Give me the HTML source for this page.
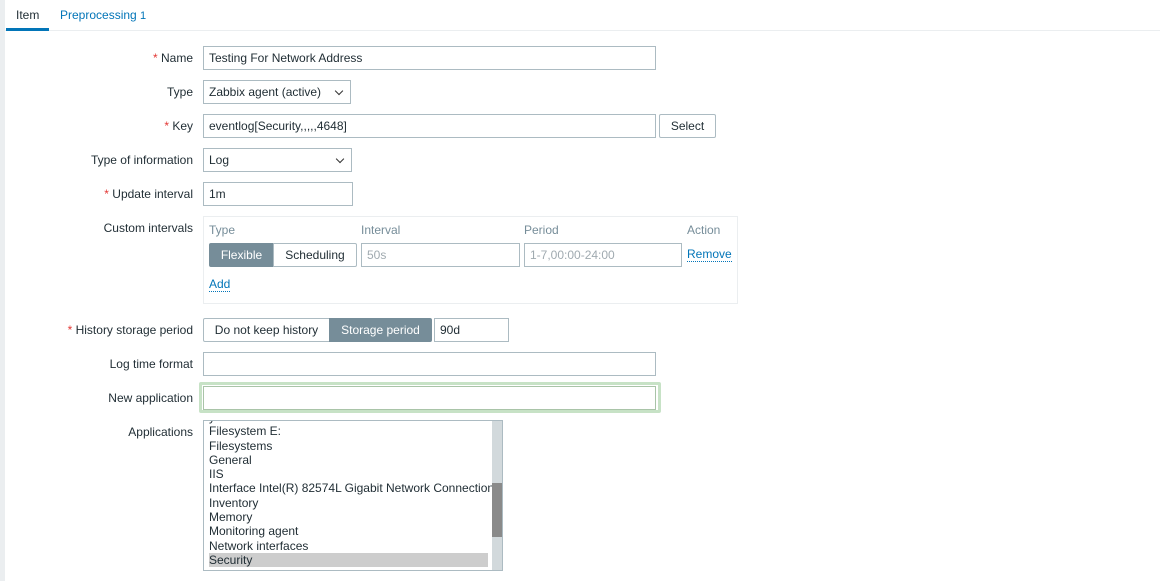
<!DOCTYPE html>
<html><head><meta charset="utf-8"><style>
*{box-sizing:border-box;margin:0;padding:0}
body{width:1160px;height:581px;overflow:hidden;background:#fff;font-family:"Liberation Sans",Arial,sans-serif;font-size:12px;color:#1f2c33;position:relative}
.a{position:absolute}
.lbl{position:absolute;right:967px;text-align:right;white-space:nowrap;line-height:14px}
.req{color:#e33734}
.in{position:absolute;border:1px solid #acbbc2;background:#fff;height:24px;padding-left:5px;line-height:22px;white-space:nowrap}
.sel::after{content:"";position:absolute;right:8px;top:7px;width:5px;height:5px;border-right:1px solid #333;border-bottom:1px solid #333;transform:rotate(45deg)}
.btn{position:absolute;border:1px solid #acbbc2;border-radius:2px;height:24px;line-height:22px;text-align:center;background:#fff}
.act{background:#768d99;color:#fff;border-color:#768d99}
.lnk{color:#0275b8;border-bottom:1px dotted #0275b8;line-height:13px}
</style></head><body>
<div class="a" style="left:0;top:0;width:5px;height:581px;background:#ebeef0"></div>
<div class="a" style="left:5px;top:30px;width:1155px;height:1px;background:#ebeef0"></div>
<div class="a" style="left:16px;top:8px;color:#1f2c33">Item</div>
<div class="a" style="left:6px;top:28px;width:43px;height:3px;background:#0275b8"></div>
<div class="a" style="left:60px;top:8px;color:#0275b8">Preprocessing <span style="font-size:11px;color:#0275b8">1</span></div>

<div class="lbl" style="top:51px"><span class="req">*</span> Name</div>
<div class="in" style="left:203px;top:46px;width:453px">Testing For Network Address</div>
<div class="lbl" style="top:85px">Type</div>
<div class="in sel" style="left:203px;top:80px;width:148px">Zabbix agent (active)</div>
<div class="lbl" style="top:119px"><span class="req">*</span> Key</div>
<div class="in" style="left:203px;top:114px;width:453px">eventlog[Security,,,,,4648]</div>
<div class="btn" style="left:659px;top:114px;width:57px">Select</div>
<div class="lbl" style="top:153px">Type of information</div>
<div class="in sel" style="left:203px;top:148px;width:149px">Log</div>
<div class="lbl" style="top:187px"><span class="req">*</span> Update interval</div>
<div class="in" style="left:203px;top:182px;width:150px">1m</div>
<div class="lbl" style="top:221px">Custom intervals</div>
<div class="a" style="left:203px;top:216px;width:535px;height:88px;border:1px solid #ebeef0"></div>
<div class="a" style="left:209px;top:223px;color:#768d99">Type</div>
<div class="a" style="left:361px;top:223px;color:#768d99">Interval</div>
<div class="a" style="left:524px;top:223px;color:#768d99">Period</div>
<div class="a" style="left:687px;top:223px;color:#768d99">Action</div>
<div class="btn act" style="left:209px;top:243px;width:65px;border-radius:2px 0 0 2px">Flexible</div>
<div class="btn" style="left:273px;top:243px;width:84px;border-radius:0 2px 2px 0">Scheduling</div>
<div class="in" style="left:361px;top:243px;width:159px;color:#a0aab0">50s</div>
<div class="in" style="left:524px;top:243px;width:158px;color:#a0aab0">1-7,00:00-24:00</div>
<div class="a lnk" style="left:687px;top:248px">Remove</div>
<div class="a lnk" style="left:209px;top:278px">Add</div>
<div class="lbl" style="top:323px"><span class="req">*</span> History storage period</div>
<div class="btn" style="left:203px;top:318px;width:127px;border-radius:2px 0 0 2px">Do not keep history</div>
<div class="btn act" style="left:329px;top:318px;width:103px;border-radius:0 2px 2px 0">Storage period</div>
<div class="in" style="left:434px;top:318px;width:75px">90d</div>
<div class="lbl" style="top:357px">Log time format</div>
<div class="in" style="left:203px;top:352px;width:453px"></div>
<div class="lbl" style="top:391px">New application</div>
<div class="a" style="left:199px;top:382px;width:462px;height:31px;border:3px solid #c7e2c6;border-radius:2px"></div>
<div class="in" style="left:203px;top:386px;width:453px;border-color:#a9c4a8"></div>
<div class="lbl" style="top:425px">Applications</div>
<div class="a" style="left:203px;top:420px;width:300px;height:151px;border:1px solid #acbbc2;overflow:hidden;line-height:14.3px">
<div style="position:absolute;left:5px;top:-11px;width:280px;white-space:nowrap">y<br>Filesystem E:<br>Filesystems<br>General<br>IIS<br>Interface Intel(R) 82574L Gigabit Network Connection<br>Inventory<br>Memory<br>Monitoring agent<br>Network interfaces<br><div style="background:#cdcdcd;width:279px">Security</div></div>
<div style="position:absolute;right:0;top:0;width:10px;height:151px;background:#d2d9dc"></div>
<div style="position:absolute;right:0;top:62px;width:10px;height:54px;background:#8a8a8a"></div>
</div>
</body></html>
